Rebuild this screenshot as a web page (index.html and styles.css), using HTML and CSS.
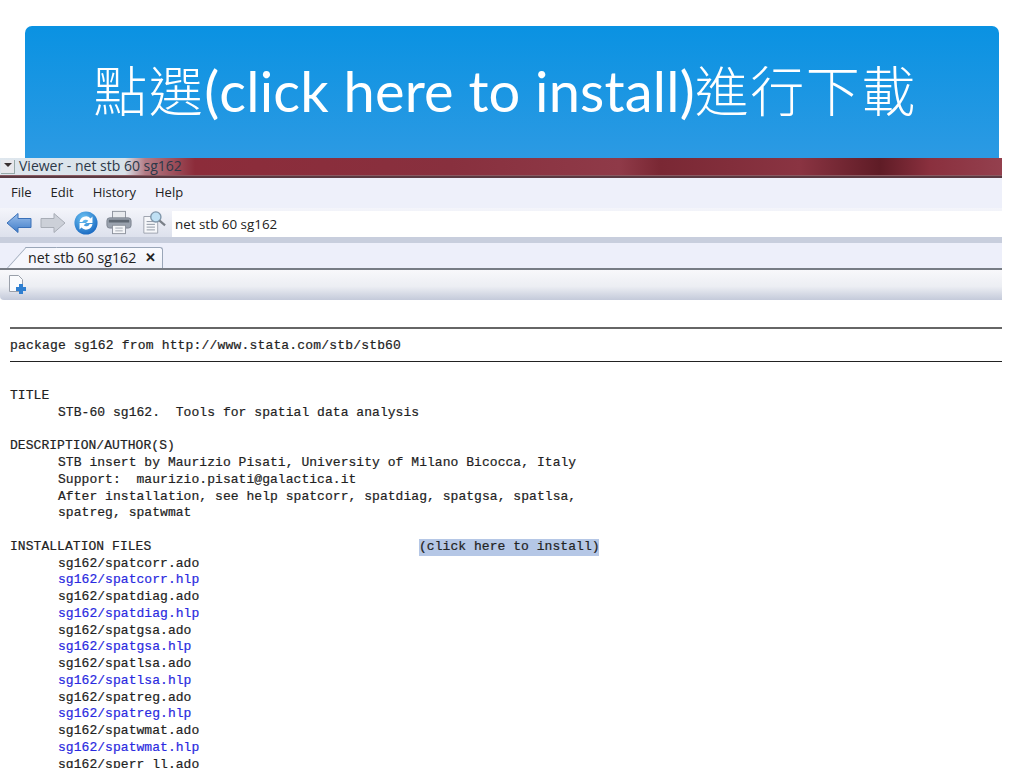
FILE: index.html
```html
<!DOCTYPE html>
<html lang="zh-Hant">
<head>
<meta charset="utf-8">
<title>點選(click here to install)進行下載</title>
<link rel="stylesheet" href="styles.css">
</head>
<body>
<header class="slide-head"><h1 class="slide-title"><span class="cjk">點選</span><span class="latin">(click here to install)</span><span class="cjk">進行下載</span></h1></header>
<section class="viewer">
  <div class="titlebar">
    <span class="sysbtn"><svg width="10" height="8" viewBox="0 0 10 8"><path d="M1 1h8L5 5z" fill="#3a3030"/></svg></span>
    <span class="title-text">Viewer - net stb 60 sg162</span>
  </div>
  <nav class="menubar"><span>File</span><span>Edit</span><span>History</span><span>Help</span></nav>
  <div class="toolbar">
    <div class="tools">
      <svg class="tool" width="26" height="24" viewBox="0 0 26 24"><defs><linearGradient id="ab" x1="0" y1="0" x2="0" y2="1"><stop offset="0" stop-color="#9cc0ec"/><stop offset="1" stop-color="#3f7cc8"/></linearGradient></defs><path d="M1 12 12 2.500V7.500H25V16.500H12V21.500Z" fill="url(#ab)" stroke="#3a70b8"/></svg>
      <svg class="tool" width="26" height="24" viewBox="0 0 26 24"><path d="M25 12 14 2.500V7.500H1V16.500H14V21.500Z" fill="#ccd0d8" stroke="#a8adb6"/></svg>
      <svg class="tool" width="24" height="24" viewBox="0 0 26 26"><defs><radialGradient id="rb" cx=".4" cy=".3" r=".8"><stop offset="0" stop-color="#6cc4f4"/><stop offset="1" stop-color="#1260bc"/></radialGradient></defs><circle cx="13" cy="13" r="12.500" fill="url(#rb)"/><path d="M6 12a7 7 0 0 1 12-4l2-2v7h-7l2.500-2.500A4 4 0 0 0 9 12zM20 14a7 7 0 0 1-12 4l-2 2v-7h7l-2.500 2.500A4 4 0 0 0 17 14z" fill="#fff"/></svg>
      <svg class="tool" width="26" height="25" viewBox="0 0 28 26"><rect x="7" y="1" width="14" height="8" fill="#e8eaee" stroke="#8c929c"/><rect x="1" y="8" width="26" height="11" rx="3" fill="#9aa2ae" stroke="#7a828e"/><rect x="3" y="10" width="22" height="3" fill="#5f6873"/><rect x="7" y="16" width="14" height="9" fill="#f4f5f8" stroke="#8c929c"/><path d="M10 19h8M10 22h8" stroke="#a0a6b0"/></svg>
      <svg class="tool preview" width="24" height="25" viewBox="0 0 26 26"><path d="M2 6.500h11l4 4V24.500H2z" fill="#f6f7fa" stroke="#9aa0aa"/><path d="M5 12h8M5 15h9M5 18h9M5 21h9" stroke="#8a93a0"/><circle cx="15" cy="7" r="5.500" fill="#bfe0f4" stroke="#7f96aa" stroke-width="1.500"/><path d="M19 11l6 5" stroke="#7a8088" stroke-width="2.500"/></svg>
    </div>
    <div class="address">net stb 60 sg162</div>
  </div>
  <div class="tabrow">
    <div class="tab"><span>net stb 60 sg162</span><span class="tab-x">✕</span></div>
  </div>
  <div class="newbar">
    <svg width="20" height="20" viewBox="0 0 20 20"><path d="M1.500 1.500h9l4 4V17.500h-13z" fill="#fafbfd" stroke="#9aa0aa"/><path d="M11 10h4v3h3v4h-3v3h-4v-3H8v-4h3z" fill="#2f7fd0"/></svg>
  </div>
</section>
<main class="help">
  <div class="rule rule-soft"></div>
  <div class="line wide">package sg162 from http://www.stata.com/stb/stb60</div>
  <div class="rule"></div>
  <div class="line"></div>
  <div class="line">TITLE</div>
  <div class="line indent">STB-60 sg162.  Tools for spatial data analysis</div>
  <div class="line"></div>
  <div class="line">DESCRIPTION/AUTHOR(S)</div>
  <div class="line indent">STB insert by Maurizio Pisati, University of Milano Bicocca, Italy</div>
  <div class="line indent">Support:  maurizio.pisati@galactica.it</div>
  <div class="line indent">After installation, see help spatcorr, spatdiag, spatgsa, spatlsa,</div>
  <div class="line indent">spatreg, spatwmat</div>
  <div class="line"></div>
  <div class="line install"><span class="install-label">INSTALLATION FILES</span><span class="install-link">(click here to install)</span></div>
  <div class="line indent">sg162/spatcorr.ado</div>
  <div class="line indent link">sg162/spatcorr.hlp</div>
  <div class="line indent">sg162/spatdiag.ado</div>
  <div class="line indent link">sg162/spatdiag.hlp</div>
  <div class="line indent">sg162/spatgsa.ado</div>
  <div class="line indent link">sg162/spatgsa.hlp</div>
  <div class="line indent">sg162/spatlsa.ado</div>
  <div class="line indent link">sg162/spatlsa.hlp</div>
  <div class="line indent">sg162/spatreg.ado</div>
  <div class="line indent link">sg162/spatreg.hlp</div>
  <div class="line indent">sg162/spatwmat.ado</div>
  <div class="line indent link">sg162/spatwmat.hlp</div>
  <div class="line indent">sg162/sperr_ll.ado</div>
</main>
</body>
</html>
```
FILE: styles.css
```css
html, body {
  margin: 0;
  height: 768px;
  overflow: hidden;
  background: #fff;
}
body {
  padding-top: 26px;
  box-sizing: border-box;
}
.slide-head {
  margin-left: 25px;
  width: 974px;
  height: 132px;
  box-sizing: border-box;
  padding: 27px 14px 0 0;
  background: linear-gradient(#0a92e2, #2c9ae3);
  border-radius: 7px 7px 0 0;
}
.slide-title {
  margin: 0;
  text-align: center;
  color: #fff;
  font: 400 56px/72px Lato, "Noto Sans CJK TC", sans-serif;
  white-space: nowrap;
}
.cjk {
  font-family: "Noto Sans CJK TC", sans-serif;
  font-weight: 300;
  font-size: 54px;
  letter-spacing: 1.500px;
}
.latin {
  letter-spacing: 0.200px;
}
.viewer {
  width: 1002px;
  font-family: "Open Sans", "Liberation Sans", sans-serif;
  color: #222;
}
.titlebar {
  height: 20px;
  box-sizing: border-box;
  padding-bottom: 1px;
  display: flex;
  align-items: center;
  gap: 4px;
  background: linear-gradient(90deg, #dfe7ee 0, #d8e2ea 125px, #b47c86 145px, #8c2c3a 195px, #88303e 450px, #8f3a48 620px, #7a2834 660px, #8a3442 800px, #5f1c26 880px, #8a303e 930px, #94404e 1002px);
  border-bottom: 2px solid #5a3a42;
  box-shadow: inset 0 -1px 0 #8a5a62;
  font-size: 14px;
  line-height: 15px;
  color: #2c3848;
}
.titlebar .title-text {
  position: relative;
  top: -1px;
}
.sysbtn {
  width: 13px;
  height: 13px;
  margin-left: 1px;
  display: flex;
  align-items: center;
  justify-content: center;
  background: #e8e8ec;
  border: 1px solid #9aa;
  border-width: 0 1px 1px 0;
}
.menubar {
  height: 30px;
  display: flex;
  align-items: center;
  gap: 19px;
  padding: 0 0 2px 11px;
  box-sizing: border-box;
  background: #eef0fa;
  font-size: 13px;
}
.toolbar {
  height: 29px;
  display: flex;
  align-items: flex-end;
  background: linear-gradient(#f4f5fb, #dde1ec);
  border-bottom: 6px solid #c8cedd;
}
.tools {
  width: 172px;
  height: 29px;
  flex: none;
  box-sizing: border-box;
  padding-left: 6px;
  display: flex;
  align-items: center;
  gap: 8px;
}
.tool {
  flex: none;
}
.preview {
  margin-left: 2px;
}
.address {
  flex: 1;
  height: 26px;
  line-height: 26px;
  padding-left: 3px;
  background: #fff;
  font-size: 13.400px;
}
.tabrow {
  height: 25px;
  display: flex;
  align-items: flex-end;
  padding-left: 27px;
  background: #edeffa;
  border-bottom: 2px solid #777c84;
}
.tab {
  position: relative;
  width: 136px;
  height: 21px;
  box-sizing: border-box;
  padding: 0 0 2px 1px;
  display: flex;
  align-items: center;
  gap: 9px;
  background: linear-gradient(#fafbff, #eef0f8);
  border: 1px solid #9aa6b8;
  border-width: 1px 1px 0 0;
  border-radius: 0 3px 0 0;
  font-size: 14.200px;
}
.tab::before {
  content: "";
  position: absolute;
  left: -20px;
  top: -1px;
  bottom: 0;
  width: 30px;
  background: #f6f7fd;
  border-left: 1px solid #9aa6b8;
  border-top: 1px solid #9aa6b8;
  transform: skewX(-42deg);
  transform-origin: bottom left;
}
.tab span {
  position: relative;
}
.tab-x {
  font-size: 13px;
  font-weight: 700;
}
.newbar {
  height: 30px;
  box-sizing: border-box;
  padding: 4px 0 0 8px;
  background: linear-gradient(#f8f8fb 0, #eceef3 55%, #c4cada 100%);
  border-radius: 0 0 0 4px;
}
.help {
  width: 992px;
  margin: 21px 0 0 10px;
  font: 13px/16.750px "Liberation Mono", "Courier New", monospace;
  color: #222;
  -webkit-text-stroke: 0.2px #222;
}
.line {
  height: 16.750px;
  white-space: pre;
  letter-spacing: 0.050px;
}
.wide {
  letter-spacing: 0.180px;
}
.indent {
  padding-left: 48px;
}
.link {
  color: #2a2ae0;
  -webkit-text-stroke: 0.2px #2a2ae0;
}
.rule {
  height: 16.750px;
}
.rule::after {
  content: "";
  display: block;
  position: relative;
  top: 6.100px;
  height: 1.500px;
  background: #222;
}
.rule-soft::after {
  height: 2px;
  background: #666;
}
.install {
  display: flex;
}
.install-label {
  width: 409px;
}
.install-link {
  width: 180px;
  text-align: center;
  background: #b5c7e6;
}
```
